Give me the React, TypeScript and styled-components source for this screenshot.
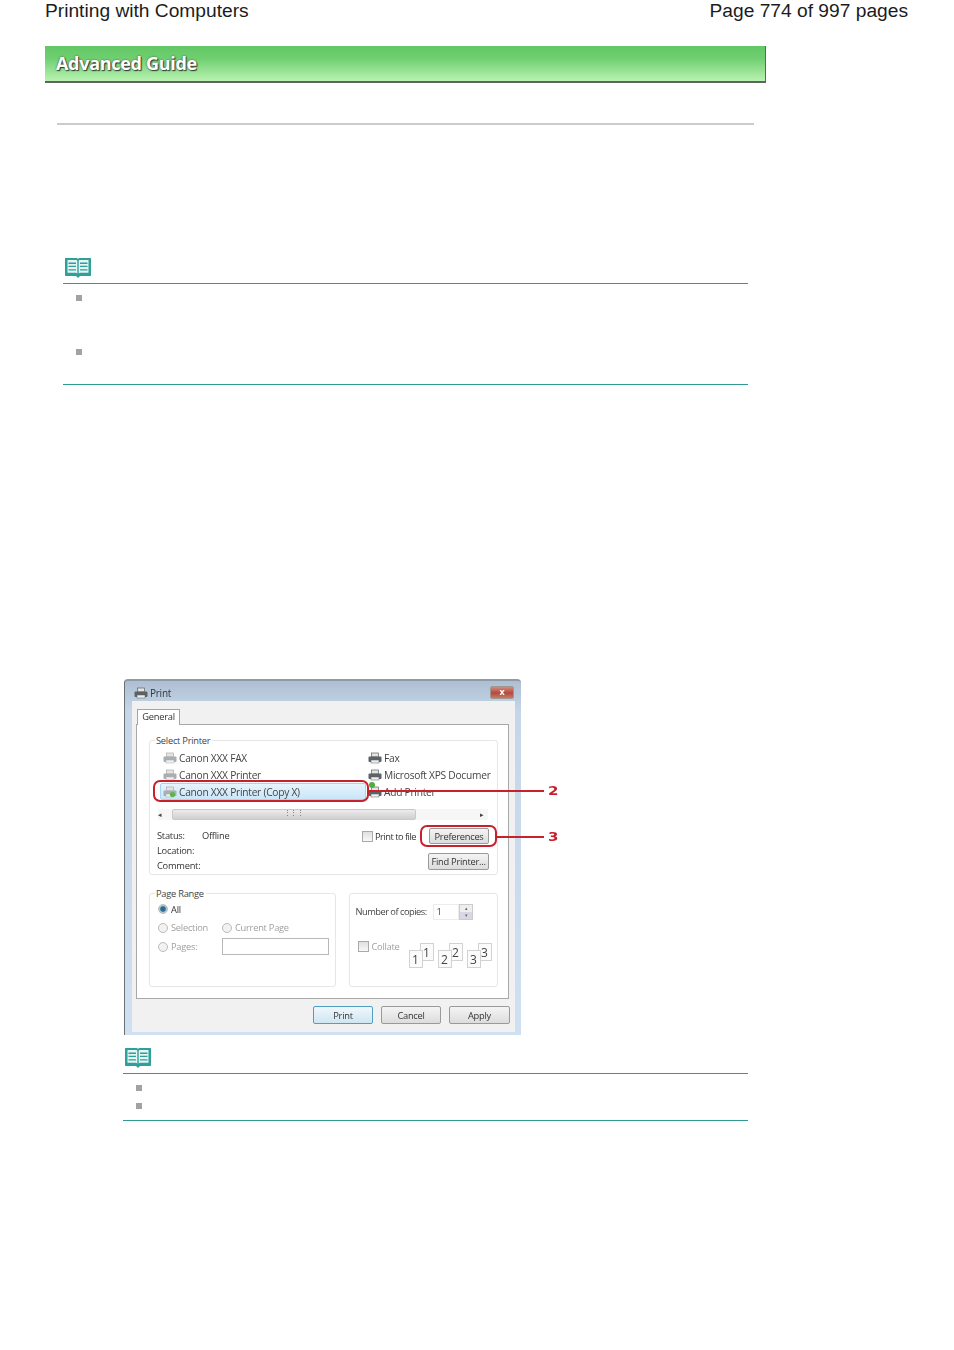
import React from "react";
import styled, { createGlobalStyle } from "styled-components";

const Global = createGlobalStyle`
  html, body { margin: 0; padding: 0; background: #fff; }
  body { font-family: "Liberation Sans", Arial, sans-serif; color: #222; }
`;

const Page = styled.div`
  width: 954px;
  height: 1350px;
  overflow: hidden;
  padding: 0 45px;
  box-sizing: border-box;
  display: flex;
  flex-direction: column;
`;
const Header = styled.header`
  display: flex;
  justify-content: space-between;
  width: 863px;
  height: 22px;
  font-size: 19.2px;
  line-height: 22px;
  color: #1c1c1c;
`;
const Banner = styled.div`
  width: 721px;
  height: 37px;
  margin-top: 24px;
  box-sizing: border-box;
  padding: 0 0 1px 11px;
  display: flex;
  align-items: center;
  background: linear-gradient(#62c765 0%, #6fcf70 35%, #b9f2b2 100%);
  border-bottom: 2px solid #5f6360;
  border-right: 1px solid #4f6f50;
  font-family: "Open Sans", sans-serif;
  font-weight: 700;
  font-size: 18px;
  letter-spacing: -0.3px;
  color: #fff;
  text-shadow: 1px 1px 1px #2f3a2f, 0 0 2px #3f4f3f;
`;
const Rule = styled.div`
  width: 697px;
  height: 2px;
  margin: 40px 0 0 12px;
  background: #cbcbcb;
`;
const Note = styled.section<{ $left: number; $top: number; $gap: number; $pad: number }>`
  margin: ${(p) => p.$top}px 0 0 ${(p) => p.$left}px;
  width: ${(p) => 703 - p.$left}px;
  ${(p) => `--gap: ${p.$gap}px; --pad: ${p.$pad}px;`}
`;
const NoteHead = styled.div`
  height: 25px;
  padding-left: 1px;
  border-bottom: 1px solid #2f9a94;
`;
const NoteList = styled.ul`
  list-style: none;
  margin: 0;
  padding: 11px 0 0 13px;
  height: var(--pad);
  border-bottom: 1px solid #2f9a94;
  display: flex;
  flex-direction: column;
  gap: var(--gap);
`;
const Bullet = styled.li`
  width: 6px;
  height: 6px;
  background: #a2a2a2;
`;
const BookSvg = styled.svg`
  display: block;
  width: 28px;
  height: 20px;
  filter: blur(0.4px);
`;
const Book = () => (
  <BookSvg viewBox="0 1 28 19" preserveAspectRatio="none">
    <path d="M1.5 1h10.500c1 0 1.600.4 2 1 .4-.6 1-1 2-1h10.500c.4 0 .5.300.5.500V17.500c0 .4-.2.500-.5.500H16l-2 2-2-2H1.500c-.3 0-.5-.1-.5-.5V1.500c0-.2.100-.5.500-.5z" fill="#2f9f9a" />
    <path d="M3.500 3h8.600c.7 0 1.200.5 1.200 1.200v11.600c-.5-.4-1-.7-1.700-.7H3.500zM24.500 3h-8.600c-.7 0-1.200.5-1.200 1.200v11.600c.5-.4 1-.7 1.700-.7h8.100z" fill="#e4f5f2" />
    <path d="M4.500 6h7.500M4.500 9h7.500M4.500 12.300h7.500M16 6h7.500M16 9h7.500M16 12.300h7.500" stroke="#2f9f9a" strokeWidth="1.300" />
  </BookSvg>
);

const ShotWrap = styled.div`
  position: relative;
  width: 440px;
  margin: 294px 0 0 79px;
`;
const Dialog = styled.div`
  width: 397px;
  height: 356px;
  box-sizing: border-box;
  padding: 0 6px 3px 7px;
  display: flex;
  flex-direction: column;
  background: linear-gradient(#aebfd3 0, #c5d6e8 30px, #cfe0f1 100%);
  border-left: 1px solid #6d7072;
  border-top: 2px solid #8e9aa6;
  border-radius: 4px 4px 0 0;
  font-family: "Open Sans", sans-serif;
  font-size: 9.300px;
  letter-spacing: -0.25px;
  color: #333;
  filter: blur(0.45px);
`;
const TitleBar = styled.div`
  height: 20px;
  flex: none;
  display: flex;
  align-items: center;
  gap: 2px;
  padding: 3px 1px 0 2px;
  box-sizing: border-box;
  color: #30383f;
`;
const TitleText = styled.span`
  flex: 1;
  font-size: 10px;
`;
const Close = styled.div`
  width: 24px;
  height: 13px;
  border-radius: 2px;
  background: linear-gradient(#cf8d80, #b54a3d 55%, #c77a6a);
  border: 1px solid #a0988f;
  box-sizing: border-box;
  color: #fff;
  font-size: 9px;
  line-height: 10px;
  text-align: center;
  font-weight: 700;
`;
const Inner = styled.div`
  flex: 1;
  background: #f1f1f1;
  padding: 8px 5px 0 4px;
  display: flex;
  flex-direction: column;
`;
const Tab = styled.div`
  width: 43px;
  height: 16px;
  box-sizing: border-box;
  background: #fff;
  border: 1px solid #a4a4a4;
  border-bottom: 0;
  margin-left: 1px;
  margin-bottom: -1px;
  position: relative;
  text-align: center;
  line-height: 14px;
  color: #333;
`;
const TabPanel = styled.div`
  width: 373px;
  height: 275px;
  box-sizing: border-box;
  background: #fff;
  border: 1px solid #a8a8a8;
  padding: 15px 10px 0 12px;
  display: flex;
  flex-direction: column;
`;
const Group = styled.div<{ $w?: number; $h: number }>`
  position: relative;
  box-sizing: border-box;
  width: ${(p) => (p.$w ? `${p.$w}px` : "100%")};
  height: ${(p) => p.$h}px;
  border: 1px solid #e6e6e6;
  border-radius: 3px;
`;
const Legend = styled.span`
  position: absolute;
  left: 5px;
  top: -7px;
  padding: 0 2px 0 1px;
  background: #fff;
  line-height: 13px;
  color: #444;
`;
const PrinterArea = styled.div`
  display: grid;
  grid-template-columns: 205px 1fr;
  padding: 8px 0 0 13px;
`;
const PrinterCol = styled.div`
  display: flex;
  flex-direction: column;
  min-width: 0;
`;
const PrinterRow = styled.div<{ $selected?: boolean }>`
  height: 17px;
  display: flex;
  align-items: center;
  gap: 2px;
  white-space: nowrap;
  font-size: 10.200px;
  color: #444;
  ${(p) =>
    p.$selected &&
    "background: linear-gradient(#e6f4fd, #c9e6f9); border: 1px solid #a8d4ef; box-sizing: border-box; margin: 0 2px 0 -3px; padding-left: 2px; border-radius: 2px;"}
`;
const PrinterSvg = styled.svg<{ $dark?: boolean }>`
  flex: none;
  width: 14px;
  height: 12px;
  color: ${(p) => (p.$dark ? "#5d6266" : "#a9aeb2")};
`;
const PrinterIcon = ({ dark, ok }: { dark?: boolean; ok?: boolean }) => (
  <PrinterSvg $dark={dark} viewBox="0 0 14 12">
    <rect x="3.500" y="1" width="7" height="4" fill="#e4e4e4" stroke="currentColor" strokeWidth=".7" />
    <rect x=".5" y="4.500" width="13" height="5.500" rx="1" fill="currentColor" />
    <rect x="3" y="8" width="8" height="3" fill="#eee" stroke="currentColor" strokeWidth=".5" />
    {ok && <circle cx="9.500" cy="8.500" r="2.600" fill="#54b948" />}
  </PrinterSvg>
);
const Dot = styled.span`
  position: absolute;
  left: 219px;
  top: 41px;
  width: 6px;
  height: 6px;
  border-radius: 50%;
  background: #4cae3c;
`;
const ScrollBar = styled.div`
  margin: 9px 9px 0 8px;
  height: 11px;
  display: flex;
  align-items: center;
  gap: 3px;
  background: #f6f6f6;
  color: #444;
  font-size: 7px;
`;
const ScrollThumb = styled.div`
  width: 244px;
  height: 11px;
  margin-left: 7px;
  box-sizing: border-box;
  border: 1px solid #c9c9c9;
  border-radius: 2px;
  background: linear-gradient(#ececec, #cfcfcf);
  text-align: center;
  line-height: 6px;
  color: #666;
`;
const ScrollEnd = styled.span`
  margin-left: auto;
  margin-right: 4px;
`;
const StatusArea = styled.div`
  display: grid;
  grid-template-columns: 205px 1fr;
  padding: 8px 0 0 7px;
`;
const StatusCol = styled.div`
  display: grid;
  grid-template-columns: 45px 1fr;
  grid-auto-rows: 15px;
  align-items: center;
`;
const ActionCol = styled.div`
  display: flex;
  flex-direction: column;
  align-items: flex-end;
  gap: 9px;
  padding-right: 9px;
`;
const ActionRow = styled.div`
  display: flex;
  align-items: center;
  gap: 2px;
  white-space: nowrap;
`;
const FileLabel = styled.span`
  letter-spacing: -0.5px;
`;
const Check = styled.span`
  display: block;
  flex: none;
  width: 11px;
  height: 11px;
  box-sizing: border-box;
  border: 1px solid #aaa;
  background: linear-gradient(#e0e0e0, #f8f8f8);
`;
const Btn = styled.div<{ $w: number; $h?: number; $primary?: boolean }>`
  width: ${(p) => p.$w}px;
  height: ${(p) => p.$h ?? 17}px;
  box-sizing: border-box;
  border: 1px solid ${(p) => (p.$primary ? "#4f9ec4" : "#9a9a9a")};
  border-radius: 2px;
  background: ${(p) => (p.$primary ? "linear-gradient(#f0f7fb, #cfe6f2)" : "linear-gradient(#f4f4f4, #dcdcdc)")};
  display: flex;
  align-items: center;
  justify-content: center;
  color: #333;
`;
const PrefBtn = styled(Btn)`
  margin-left: 11px;
`;
const RangeRow = styled.div`
  display: flex;
  gap: 13px;
  margin-top: 18px;
`;
const RangeBody = styled.div`
  display: grid;
  grid-template-columns: 64px 1fr;
  grid-template-rows: 18px 19px 19px;
  align-items: center;
  padding: 6px 6px 0 8px;
  color: #999;
`;
const RadioLabel = styled.label<{ $on?: boolean }>`
  display: flex;
  align-items: center;
  gap: 3px;
  color: ${(p) => (p.$on ? "#333" : "#a0a0a0")};
`;
const Radio = styled.span<{ $on?: boolean }>`
  display: block;
  width: 10px;
  height: 10px;
  box-sizing: border-box;
  border-radius: 50%;
  border: 1px solid #bbb;
  background: ${(p) => (p.$on ? "radial-gradient(circle, #2c6d93 40%, #b8c8d4 60%)" : "#f2f2f2")};
`;
const PagesInput = styled.div`
  height: 17px;
  box-sizing: border-box;
  border: 1px solid #b8b8b8;
  background: #fff;
`;
const CopiesBody = styled.div`
  padding: 9px 0 0 5px;
  display: flex;
  flex-direction: column;
`;
const CopiesRow = styled.div`
  display: flex;
  align-items: center;
  height: 17px;
  color: #444;
  white-space: nowrap;
`;
const CopiesLabel = styled.span`
  width: 72px;
  letter-spacing: -0.5px;
`;
const CopiesInput = styled.div`
  width: 26px;
  margin-left: 6px;
  height: 16px;
  padding-left: 2px;
  box-sizing: border-box;
  border: 1px solid #ececec;
  line-height: 14px;
`;
const Stepper = styled.div`
  width: 14px;
  height: 16px;
  box-sizing: border-box;
  border: 1px solid #ccc;
  background: linear-gradient(#eee 50%, #d8d8e4 50%);
  display: flex;
  flex-direction: column;
  align-items: center;
  font-size: 5px;
  line-height: 7px;
  color: #666;
`;
const CollateRow = styled.div`
  display: flex;
  margin-top: 14px;
  padding-left: 3px;
`;
const CollateLabel = styled.div`
  display: flex;
  align-items: center;
  gap: 2px;
  height: 24px;
  color: #a0a0a0;
`;
const Sets = styled.div`
  display: flex;
  gap: 4px;
  margin-left: 9px;
  margin-top: 9px;
`;
const PageSet = styled.div`
  position: relative;
  width: 25px;
  height: 25px;
`;
const Sheet = styled.div<{ $back?: boolean }>`
  position: absolute;
  width: 14px;
  height: 18px;
  box-sizing: border-box;
  background: #fbfbfb;
  border: 1px solid #d2d2d2;
  display: flex;
  align-items: flex-end;
  justify-content: center;
  font-size: 12px;
  line-height: 14px;
  color: #444;
  letter-spacing: 0;
  ${(p) => (p.$back ? "right: 0; top: 0;" : "left: 0; bottom: 0;")}
`;
const Footer = styled.div`
  display: flex;
  justify-content: flex-end;
  gap: 8px;
  padding: 7px 0 0;
`;
const FooterBtn = styled(Btn)`
  height: 18px;
`;
const RedBox = styled.div<{ $l: number; $t: number; $w: number; $h: number }>`
  position: absolute;
  left: ${(p) => p.$l}px;
  top: ${(p) => p.$t}px;
  width: ${(p) => p.$w}px;
  height: ${(p) => p.$h}px;
  box-sizing: border-box;
  border: 2px solid #c8202c;
  border-radius: 7px;
`;
const RedLine = styled.div<{ $l: number; $t: number; $w: number }>`
  position: absolute;
  left: ${(p) => p.$l}px;
  top: ${(p) => p.$t}px;
  width: ${(p) => p.$w}px;
  height: 2px;
  background: #c8202c;
`;
const Callout = styled.span<{ $l: number; $t: number }>`
  position: absolute;
  left: ${(p) => p.$l}px;
  top: ${(p) => p.$t}px;
  font-family: "DejaVu Sans", sans-serif;
  font-weight: 700;
  font-size: 12px;
  line-height: 14px;
  color: #c8202c;
  transform: scaleX(1.25);
  transform-origin: left center;
`;

export default function App() {
  return (
    <Page>
      <Global />
      <Header>
        <span>Printing with Computers</span>
        <span>Page 774 of 997 pages</span>
      </Header>
      <Banner>Advanced Guide</Banner>
      <Rule />
      <Note $left={18} $top={133} $gap={48} $pad={89}>
        <NoteHead><Book /></NoteHead>
        <NoteList><Bullet /><Bullet /></NoteList>
      </Note>
      <ShotWrap>
        <Dialog>
          <TitleBar>
            <PrinterIcon dark />
            <TitleText>Print</TitleText>
            <Close>x</Close>
          </TitleBar>
          <Inner>
            <Tab>General</Tab>
            <TabPanel>
              <Group $h={135}>
                <Legend>Select Printer</Legend>
                <PrinterArea>
                  <PrinterCol>
                    <PrinterRow><PrinterIcon />Canon XXX FAX</PrinterRow>
                    <PrinterRow><PrinterIcon />Canon XXX Printer</PrinterRow>
                    <PrinterRow $selected><PrinterIcon ok />Canon XXX Printer (Copy X)</PrinterRow>
                  </PrinterCol>
                  <PrinterCol>
                    <PrinterRow><PrinterIcon dark />Fax</PrinterRow>
                    <PrinterRow><PrinterIcon dark />Microsoft XPS Documer</PrinterRow>
                    <PrinterRow><PrinterIcon dark />Add Printer</PrinterRow>
                  </PrinterCol>
                </PrinterArea>
                <Dot />
                <ScrollBar>
                  <span>◂</span>
                  <ScrollThumb>⋮⋮⋮</ScrollThumb>
                  <ScrollEnd>▸</ScrollEnd>
                </ScrollBar>
                <StatusArea>
                  <StatusCol>
                    <span>Status:</span><span>Offline</span>
                    <span>Location:</span><span />
                    <span>Comment:</span><span />
                  </StatusCol>
                  <ActionCol>
                    <ActionRow>
                      <Check />
                      <FileLabel>Print to file</FileLabel>
                      <PrefBtn $w={60} $h={16}>Preferences</PrefBtn>
                    </ActionRow>
                    <Btn $w={61}>Find Printer...</Btn>
                  </ActionCol>
                </StatusArea>
              </Group>
              <RangeRow>
                <Group $w={188} $h={94}>
                  <Legend>Page Range</Legend>
                  <RangeBody>
                    <RadioLabel $on><Radio $on />All</RadioLabel>
                    <span />
                    <RadioLabel><Radio />Selection</RadioLabel>
                    <RadioLabel><Radio />Current Page</RadioLabel>
                    <RadioLabel><Radio />Pages:</RadioLabel>
                    <PagesInput />
                  </RangeBody>
                </Group>
                <Group $w={149} $h={94}>
                  <CopiesBody>
                    <CopiesRow>
                      <CopiesLabel>Number of copies:</CopiesLabel>
                      <CopiesInput>1</CopiesInput>
                      <Stepper><span>▴</span><span>▾</span></Stepper>
                    </CopiesRow>
                    <CollateRow>
                      <CollateLabel><Check />Collate</CollateLabel>
                      <Sets>
                        {[1, 2, 3].map((n) => (
                          <PageSet key={n}>
                            <Sheet $back>{n}</Sheet>
                            <Sheet>{n}</Sheet>
                          </PageSet>
                        ))}
                      </Sets>
                    </CollateRow>
                  </CopiesBody>
                </Group>
              </RangeRow>
            </TabPanel>
            <Footer>
              <FooterBtn $w={60} $primary>Print</FooterBtn>
              <FooterBtn $w={60}>Cancel</FooterBtn>
              <FooterBtn $w={61}>Apply</FooterBtn>
            </Footer>
          </Inner>
        </Dialog>
        <RedBox $l={29} $t={101} $w={216} $h={22} />
        <RedLine $l={245} $t={111} $w={175} />
        <Callout $l={424} $t={105}>2</Callout>
        <RedBox $l={296} $t={146} $w={77} $h={22} />
        <RedLine $l={373} $t={157} $w={47} />
        <Callout $l={424} $t={151}>3</Callout>
      </ShotWrap>
      <Note $left={78} $top={13} $gap={12} $pad={35}>
        <NoteHead><Book /></NoteHead>
        <NoteList><Bullet /><Bullet /></NoteList>
      </Note>
    </Page>
  );
}
